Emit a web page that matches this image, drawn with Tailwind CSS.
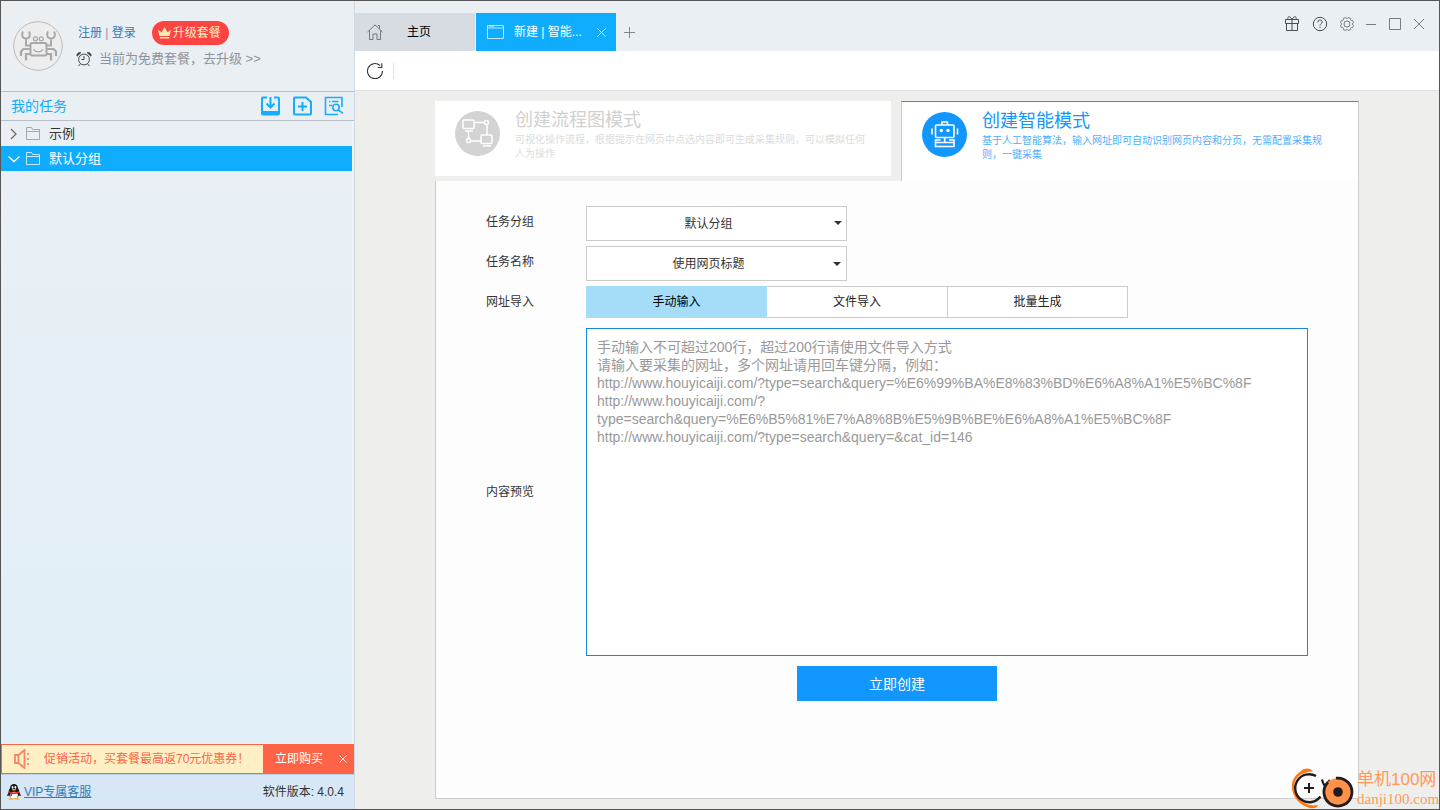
<!DOCTYPE html>
<html lang="zh-CN">
<head>
<meta charset="utf-8">
<title>新建 | 智能模式</title>
<script src="https://cdn.jsdelivr.net/npm/@tailwindcss/browser@4"></script>
</head>
<body class="relative flex min-h-screen border border-[#555] bg-[#eaeff4] font-['Liberation_Sans','Noto_Sans_CJK_SC',sans-serif] text-xs text-[#333]">

<!-- Sidebar -->
<aside class="flex w-[354px] shrink-0 flex-col border-r border-[#cfd9e3] bg-linear-to-b from-[#eaeff4] from-15% to-[#e0eff9]">
  <header class="flex h-[91px] border-b border-[#b9c0c9] pt-5 pl-3">
    <svg class="size-[50px] shrink-0" viewBox="0 0 50 50" fill="none" stroke="#a9a9a9">
      <circle cx="25" cy="25" r="24.3" fill="#ededed" stroke="#bbb"/>
      <rect x="17.500" y="22" width="16" height="12.500" rx="1.500" stroke-width="2"/>
      <circle cx="22.500" cy="17.800" r="2" stroke-width="1.300"/><circle cx="28.300" cy="17.800" r="2" stroke-width="1.300"/>
      <path d="M20.500 28.300c2.500 3.400 7 3.400 9.500 0" stroke-width="1.400"/>
      <path d="M17.500 24.500h-4.500V17.500M33.500 24.500h4.500V17.500M10 10.500c-2 3.500-.5 7 3 7s5-3.500 3-7M41 10.500c2 3.500.5 7-3 7s-5-3.500-3-7" stroke-width="2"/>
      <path d="M17.500 28H10.500L8 30.500V35M17.500 33H13v6.500M33.500 28h7L43 30.500V35M33.500 33H38v6.500" stroke-width="2.200"/>
    </svg>
    <div class="ml-[13px] flex flex-col">
      <div class="ml-0.5 flex items-center">
        <nav class="text-xs text-[#337ab7]"><a href="#">注册</a> <span class="text-[#8a96a3]">|</span> <a href="#">登录</a></nav>
        <button class="ml-4 flex h-6 items-center gap-0.5 rounded-full bg-[#ff4343] px-1.5 pr-2 text-xs text-[#ffeec0]">
          <svg class="h-3 w-[13px]" viewBox="0 0 13 12" fill="#ffe9ae"><path d="M0 3l3.500 2.300L6.500 0l3 5.300L13 3l-1.500 6h-10zM1.800 10h9.400v1.500H1.800z"/></svg>
          升级套餐
        </button>
      </div>
      <div class="mt-[5px] flex items-center gap-[7px] text-[13px] text-[#8f949a]">
        <svg class="size-4" viewBox="0 0 16 16" fill="none" stroke="#444"><circle cx="8" cy="8.500" r="5.400"/><path d="M8 5v3.500H5.500M4.300 13l-1.800 2M11.700 13l1.800 2"/><path d="M1 5.200C.5 3 2.500 1 4.800 1.700zM15 5.200c.5-2.200-1.500-4.200-3.800-3.500z" fill="#444"/></svg>
        <a href="#">当前为免费套餐，去升级 &gt;&gt;</a>
      </div>
    </div>
  </header>

  <div class="flex h-[29px] items-center border-b border-[#b9c0c9] px-2.5 text-[#10adff]">
    <h2 class="flex-1 text-sm">我的任务</h2>
    <div class="flex gap-3">
      <button aria-label="导入任务"><svg class="size-5" viewBox="0 0 20 20" fill="none" stroke="#16adfb" stroke-width="2"><path d="M7 1.500H3a1 1 0 0 0-1 1v15a1 1 0 0 0 1 1h15a1 1 0 0 0 1-1v-15a1 1 0 0 0-1-1h-4M10.500 1v10M6.500 7.500l4 4 4-4"/><path d="M2 17h17" stroke-width="4"/></svg></button>
      <button aria-label="新建任务"><svg class="size-5" viewBox="0 0 20 20" fill="none" stroke="#16adfb" stroke-width="2"><path d="M14 1.500H3a1 1 0 0 0-1 1v15a1 1 0 0 0 1 1h15a1 1 0 0 0 1-1V6zM10.500 6v9M6 10.500h9"/></svg></button>
      <button aria-label="搜索任务"><svg class="size-5" viewBox="0 0 20 20" fill="none" stroke="#16adfb" stroke-width="1.600"><path d="M18 11V1.500H1.500v17H14M5 5.500h1.500M8 5.500h6.500M5 9.500h3"/><circle cx="12" cy="11.500" r="3.200"/><path d="M14.300 13.800l4.700 3.500"/></svg></button>
    </div>
  </div>

  <div class="flex-1 border-r-2 border-[#f2f3f5] text-[13px]">
    <button class="flex h-[25px] w-full items-center pl-2">
      <svg class="size-3" viewBox="0 0 12 12" fill="none" stroke="#666" stroke-width="1.200"><path d="M2 1l5 5-5 5"/></svg>
      <svg class="ml-1 h-[13px] w-4" viewBox="0 0 16 13" fill="none" stroke="#a4a9ae"><path d="M1.500 12.500V.5h5l1 2h7v10zM1.500 4.500h13"/></svg>
      <span class="ml-2">示例</span>
    </button>
    <button class="flex h-[25px] w-full items-center bg-[#10adff] pl-1.5 text-white">
      <svg class="size-3.5" viewBox="0 0 14 14" fill="none" stroke="#fff" stroke-width="1.300"><path d="M1.500 4.500l5.500 5 5.500-5"/></svg>
      <svg class="ml-1 h-[13px] w-4" viewBox="0 0 16 13" fill="none" stroke="#c5eaff"><path d="M1.500 12.500V.5h5l1 2h7v10zM1.500 4.500h13"/></svg>
      <span class="ml-2">默认分组</span>
    </button>
  </div>

  <div class="flex h-[30px] items-center border border-[#ff6347] bg-[#ffefc4] text-[#ff6347]">
    <svg class="ml-3 h-5 w-4" viewBox="0 0 16 20" fill="none" stroke="#f98468" stroke-width="1.800"><path d="M1 6h3.500l6-5v18l-6-5H1zM4.500 6v8"/><path d="M14 4v12" stroke-dasharray="2 3"/></svg>
    <span class="ml-3.5 flex-1 whitespace-nowrap">促销活动，买套餐最高返70元优惠券！</span>
    <div class="flex h-full items-center bg-[#ff6347] pl-3 text-white">
      <a href="#">立即购买</a>
      <button class="ml-4 mr-1.5" aria-label="关闭"><svg class="size-2" viewBox="0 0 8 8" stroke="#ffe4df"><path d="M.5.5l7 7m0-7l-7 7"/></svg></button>
    </div>
  </div>
  <footer class="flex h-[35px] items-center border-t border-[#bcd0e4] bg-[#d8e7f6] pr-2.5 pl-1.5">
    <svg class="h-4 w-3.5" viewBox="0 0 14 16"><ellipse cx="7" cy="8.500" rx="5.500" ry="6.500" fill="#151515"/><ellipse cx="7" cy="4.500" rx="4" ry="4.500" fill="#151515"/><path d="M1.500 8L0 12l2-.5zM12.500 8l1.500 4-2-.5z" fill="#151515"/><ellipse cx="7" cy="11.300" rx="3.800" ry="3.500" fill="#fff"/><ellipse cx="5.600" cy="3.400" rx=".9" ry="1.300" fill="#fff"/><ellipse cx="8.400" cy="3.400" rx=".9" ry="1.300" fill="#fff"/><ellipse cx="7" cy="5.800" rx="2.400" ry=".8" fill="#f5a623"/><path d="M2 7.300c3 1.500 7 1.500 10 0v1.800c-2.500 1-5 1.200-7 .9v2H3.500V9.500L2 9z" fill="#e5261f"/><ellipse cx="4" cy="15" rx="2.800" ry="1" fill="#f5b942"/><ellipse cx="10" cy="15" rx="2.800" ry="1" fill="#f5b942"/></svg>
    <a class="ml-[3px] flex-1 text-[#337ab7] underline" href="#">VIP专属客服</a>
    <span>软件版本: 4.0.4</span>
  </footer>
</aside>

<!-- Workspace -->
<div class="flex min-w-0 flex-1 flex-col">
  <header class="flex h-[50px] items-end">
    <button class="flex h-[38px] w-[120px] items-center bg-[#d7dce3] pl-3 text-black">
      <svg class="size-4" viewBox="0 0 16 16" fill="none" stroke="#777"><path d="M.5 8L8 .8 15.500 8M2.500 6.500v9h3.500V10h4v5.500h3.500v-9M12.500 4.500V1.500h-1.500"/></svg>
      <span class="ml-6">主页</span>
    </button>
    <div class="ml-px flex h-[38px] w-[140px] items-center bg-[#10adff] pr-2.5 pl-[11px] text-white">
      <svg class="h-3.5 w-[17px]" viewBox="0 0 17 14" fill="none" stroke="#b9e5ff"><path d="M.5.5h16v13H.5zM.5 3h16M2 1.800h5"/></svg>
      <button class="ml-2.5 flex-1 text-left whitespace-nowrap">新建 | 智能...</button>
      <button aria-label="关闭标签"><svg class="size-[9px]" viewBox="0 0 9 9" stroke="#fff"><path d="M.5.5l8 8m0-8l-8 8"/></svg></button>
    </div>
    <button class="ml-2 h-[38px]" aria-label="新标签"><svg class="size-[11px]" viewBox="0 0 11 11" stroke="#81868b"><path d="M0 5.500h11M5.500 0v11"/></svg></button>
    <div class="mb-[19px] ml-auto flex items-center pr-3.5">
      <button aria-label="礼物"><svg class="size-4" viewBox="0 0 16 16" fill="none" stroke="#4a4d51"><path d="M1.500 3.500h13v4h-13zM2.500 7.500v7h11v-7M8 3.500v11M8 3.500C6-.5 3 0 4 3.500M8 3.500c2-4 5-3.500 4 0"/></svg></button>
      <button class="ml-3" aria-label="帮助"><svg class="size-4" viewBox="0 0 16 16" fill="none" stroke="#4a4d51"><circle cx="8" cy="8" r="6.700"/><path d="M5.800 6.300c0-3 4.400-3 4.400-.3C10.200 7.600 8 7.600 8 9.500M8 10.800V12"/></svg></button>
      <button class="ml-[11px]" aria-label="设置"><svg class="size-4" viewBox="0 0 16 16" fill="none" stroke="#777b80"><circle cx="8" cy="8" r="3"/><path d="M6.600 1.500c.3 1.300 2.500 1.300 2.800 0l2.200.9c-.7 1.200.8 2.700 2 2l.9 2.200c-1.300.3-1.300 2.500 0 2.800l-.9 2.200c-1.200-.7-2.700.8-2 2l-2.200.9c-.3-1.300-2.500-1.300-2.800 0l-2.200-.9c.7-1.200-.8-2.700-2-2l-.9-2.200c1.300-.3 1.300-2.500 0-2.800l.9-2.200c1.200.7 2.700-.8 2-2z"/></svg></button>
      <button class="ml-2.5" aria-label="最小化"><svg class="size-3" viewBox="0 0 12 12" stroke="#777b80"><path d="M1 6.500h10"/></svg></button>
      <button class="ml-3" aria-label="最大化"><svg class="size-3" viewBox="0 0 12 12" fill="none" stroke="#777b80"><path d="M.5.5h11v11H.5z"/></svg></button>
      <button class="ml-3" aria-label="关闭"><svg class="size-3" viewBox="0 0 12 12" stroke="#777b80"><path d="M1 1l10 10m0-10L1 11"/></svg></button>
    </div>
  </header>

  <div class="flex h-10 items-center border-b border-[#e2e2e0] bg-white pl-3">
    <button aria-label="刷新"><svg class="size-4" viewBox="0 0 16 16" fill="none" stroke="#333" stroke-width="1.100"><path d="M15.500 8A7.500 7.500 0 1 1 13 2.500M14.800.3v4.200h-4"/></svg></button>
    <span class="ml-2.5 h-4 w-px bg-[#e2e2e2]"></span>
  </div>

  <main class="flex flex-1 flex-col bg-[#eeeeed] px-20 py-2.5">
    <div class="grid h-20 grid-cols-[456fr_458fr] gap-2.5">
      <button class="mb-[5px] flex items-start bg-white pl-5 text-left">
        <svg class="mt-2.5 size-[45px] shrink-0" viewBox="0 0 45 45" fill="none" stroke="#fff" stroke-width="1.500"><circle cx="22.500" cy="22.500" r="22.500" fill="#d3d3d3" stroke="none"/><rect x="8" y="9" width="11" height="8.500" rx="1"/><rect x="26" y="24" width="11" height="8.500" rx="1"/><path d="M10 20h8M28 35h8M19 11.500h10M32 14v10M13.500 20v7.500M16 30h10"/><circle cx="31.500" cy="11.500" r="2"/><circle cx="13.500" cy="29.500" r="2"/></svg>
        <span class="mt-[7px] mr-5 ml-[15px] block">
          <span class="block text-lg leading-[25px] text-[#d0d0d0]">创建流程图模式</span>
          <span class="block text-[10px] leading-3.5 text-[#dcdcdc]">可视化操作流程，根据提示在网页中点选内容即可生成采集规则，可以模拟任何人为操作</span>
        </span>
      </button>
      <button class="flex items-start border-x border-t border-x-[#ccc] border-t-[#1996ff] bg-white pl-5 text-left">
        <svg class="mt-2.5 size-[45px] shrink-0" viewBox="0 0 45 45" fill="none" stroke="#fff" stroke-width="1.600"><circle cx="22.500" cy="22.500" r="22.500" fill="#1296ff" stroke="none"/><rect x="13.500" y="13" width="18.500" height="12.500" rx="1"/><path d="M20 13v-3h5.500v3M10 16.500v6M35.500 16.500v6M22.700 26v5M18.500 28h-5v2.500H32V28h-5M13.500 30.500v4H32v-4"/><circle cx="19.300" cy="18.500" r="1.700" fill="#fff" stroke="none"/><circle cx="26" cy="18.500" r="1.700" fill="#fff" stroke="none"/></svg>
        <span class="mt-[7px] mr-5 ml-[15px] block">
          <span class="block text-lg leading-[25px] text-[#1296ff]">创建智能模式</span>
          <span class="block text-[10px] leading-3.5 text-[#4db0ff]">基于人工智能算法，输入网址即可自动识别网页内容和分页，无需配置采集规则，一键采集</span>
        </span>
      </button>
    </div>

    <form class="flex flex-1 flex-col border-x border-b border-[#ccc] bg-[#fdfdfd] px-[50px] pt-[25px]">
      <div class="flex">
        <label class="w-[100px] leading-8" for="group">任务分组</label>
        <div class="relative mb-[5px]">
          <select id="group" class="h-[35px] w-[261px] appearance-none border border-[#ccc] bg-white pr-4 text-center [text-align-last:center]"><option>默认分组</option></select>
          <svg class="pointer-events-none absolute top-[15px] right-[5px] h-1 w-2" viewBox="0 0 8 4" fill="#333"><path d="M0 0h8L4 4z"/></svg>
        </div>
      </div>
      <div class="flex">
        <label class="w-[100px] leading-8" for="name">任务名称</label>
        <div class="relative mb-[5px]">
          <select id="name" class="h-[35px] w-[261px] appearance-none border border-[#ccc] bg-white pr-4 text-center [text-align-last:center]"><option>使用网页标题</option></select>
          <svg class="pointer-events-none absolute top-4 right-[6px] h-1 w-2" viewBox="0 0 8 4" fill="#333"><path d="M0 0h8L4 4z"/></svg>
        </div>
      </div>
      <div class="mb-2.5 flex">
        <span class="w-[100px] leading-8" id="import">网址导入</span>
        <div class="grid h-8 w-[542px] grid-cols-[181fr_181fr_180fr] text-[#222]" role="group" aria-labelledby="import">
          <button type="button" class="border border-[#a5ddf8] bg-[#a5ddf8] text-black">手动输入</button>
          <button type="button" class="border-y border-r border-[#ccc] bg-white">文件导入</button>
          <button type="button" class="border-y border-r border-[#ccc] bg-white">批量生成</button>
        </div>
      </div>
      <div class="flex items-center">
        <label class="w-[100px] shrink-0" for="urls">内容预览</label>
        <textarea id="urls" class="h-[328px] min-w-0 flex-1 resize-none border border-[#1a88d8] bg-white px-2.5 py-[9px] text-sm leading-[18px] placeholder:text-[#999]" placeholder="手动输入不可超过200行，超过200行请使用文件导入方式&#10;请输入要采集的网址，多个网址请用回车键分隔，例如：&#10;http://www.houyicaiji.com/?type=search&amp;query=%E6%99%BA%E8%83%BD%E6%A8%A1%E5%BC%8F&#10;http://www.houyicaiji.com/?&#10;type=search&amp;query=%E6%B5%81%E7%A8%8B%E5%9B%BE%E6%A8%A1%E5%BC%8F&#10;http://www.houyicaiji.com/?type=search&amp;query=&amp;cat_id=146"></textarea>
      </div>
      <button type="button" class="mx-auto mt-2.5 h-[35px] w-[200px] bg-[#1296ff] text-sm text-white">立即创建</button>
    </form>
  </main>
</div>

<!-- Watermark over the lower right corner -->
<div class="absolute right-px bottom-0 flex items-center text-[#ff9a56]">
  <svg class="h-[42px] w-16" viewBox="0 0 64 42" fill="none">
    <path d="M22 4.500C20 1 14 .5 10 4 3 9 0 14 1 22c1.500 10 9 16 15 18 4 2 10 2 11-2-4 1-9 .5-13-2C7 32 3.500 27 3 21 2.500 13 8 5 22 4.500z" fill="#ff7a14"/>
    <path d="M25 9A14 14 0 1 0 29.500 29.500" stroke="#231c1c" stroke-width="2.400"/>
    <path d="M18 16v10M13 21h10" stroke="#231c1c" stroke-width="2"/>
    <path d="M31 12.500c.5 2 1 4 2.500 6M39 13l-4.500 5.500" stroke="#231c1c" stroke-width="2.200"/>
    <circle cx="47" cy="25" r="14" fill="#ff914a"/>
    <path d="M45 11.200A14 14 0 1 1 37 15.200" stroke="#231c1c" stroke-width="2.800"/>
    <circle cx="47" cy="25" r="4.800" fill="#231c1c"/>
  </svg>
  <div class="ml-0.5 w-[81px]">
    <div class="text-[17px] leading-[22px] whitespace-nowrap">单机100网</div>
    <div class="font-['Liberation_Serif',serif] text-[15px] leading-4">danji100.com</div>
  </div>
</div>
</body>
</html>
